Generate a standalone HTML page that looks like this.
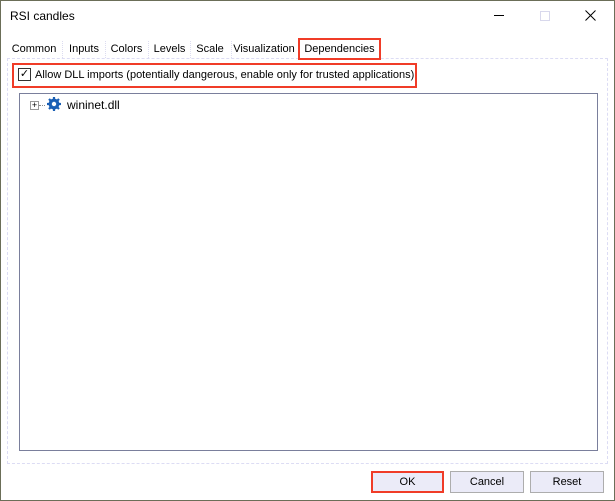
<!DOCTYPE html><html><head><style>
body{margin:0;width:615px;height:501px;background:#fff;font-family:"Liberation Sans",sans-serif;font-size:11px;color:#000;position:relative;overflow:hidden}
.a{position:absolute}
.win{left:0;top:0;width:613px;height:499px;border:1px solid #6b6e58}
.tab{top:41px;height:17px;line-height:17px;text-align:center;border-left:1px dotted #dcdcf0}
.btn{top:471px;height:20px;line-height:20px;text-align:center;background:#ebebf8;border:1px solid #adadad;width:72px}
</style></head><body>
<div class="a win"></div>
<div class="a" style="left:10px;top:9px;font-size:12px">RSI candles</div>
<div class="a" style="left:494px;top:15px;width:10px;height:1px;background:#000"></div>
<div class="a" style="left:540px;top:11px;width:8px;height:8px;border:1px solid #d8d8ec"></div>
<svg class="a" style="left:585px;top:10px" width="11" height="11"><path d="M0.5 0.5L10.5 10.5M10.5 0.5L0.5 10.5" stroke="#000" stroke-width="1"/></svg>
<div class="a" style="left:7px;top:58px;width:599px;height:404px;border:1px dashed #dcdcf4"></div>
<div class="a tab" style="left:8px;width:52px;border-left:none">Common</div>
<div class="a tab" style="left:62px;width:42px">Inputs</div>
<div class="a tab" style="left:105px;width:41px">Colors</div>
<div class="a tab" style="left:148px;width:41px">Levels</div>
<div class="a tab" style="left:190px;width:38px">Scale</div>
<div class="a tab" style="left:231px;width:64px">Visualization</div>
<div class="a" style="left:298px;top:38px;width:79px;height:18px;border:2px solid #f03c28;line-height:18px;text-align:center">Dependencies</div>
<div class="a" style="left:12px;top:63px;width:401px;height:21px;border:2px solid #f03c28"></div>
<div class="a" style="left:18px;top:68px;width:11px;height:11px;border:1px solid #333;font-size:11px;line-height:11px;text-align:center">✓</div>
<div class="a" style="left:35px;top:69px">Allow DLL imports (potentially dangerous, enable only for trusted applications)</div>
<div class="a" style="left:19px;top:93px;width:577px;height:356px;border:1px solid #7a7f9c"></div>
<div class="a" style="left:30px;top:101px;width:7px;height:7px;border:1px solid #999;font-size:9px;line-height:7px;text-align:center">+</div>
<div class="a" style="left:39px;top:105px;width:6px;border-top:1px dotted #888"></div>
<svg class="a" style="left:47px;top:97px" width="14" height="14" viewBox="0 0 14 14"><circle cx="7" cy="7" r="4.2" fill="none" stroke="#1a5fb4" stroke-width="2.4"/><g stroke="#1a5fb4" stroke-width="2.2"><line x1="7" y1="0" x2="7" y2="14"/><line x1="0" y1="7" x2="14" y2="7"/><line x1="2" y1="2" x2="12" y2="12"/><line x1="12" y1="2" x2="2" y2="12"/></g><circle cx="7" cy="7" r="2.2" fill="#fff"/></svg>
<div class="a" style="left:67px;top:98px;font-size:12px">wininet.dll</div>
<div class="a btn" style="left:371px;top:471px;width:69px;height:18px;line-height:18px;border:2px solid #f03c28">OK</div>
<div class="a btn" style="left:450px">Cancel</div>
<div class="a btn" style="left:530px">Reset</div>
</body></html>
